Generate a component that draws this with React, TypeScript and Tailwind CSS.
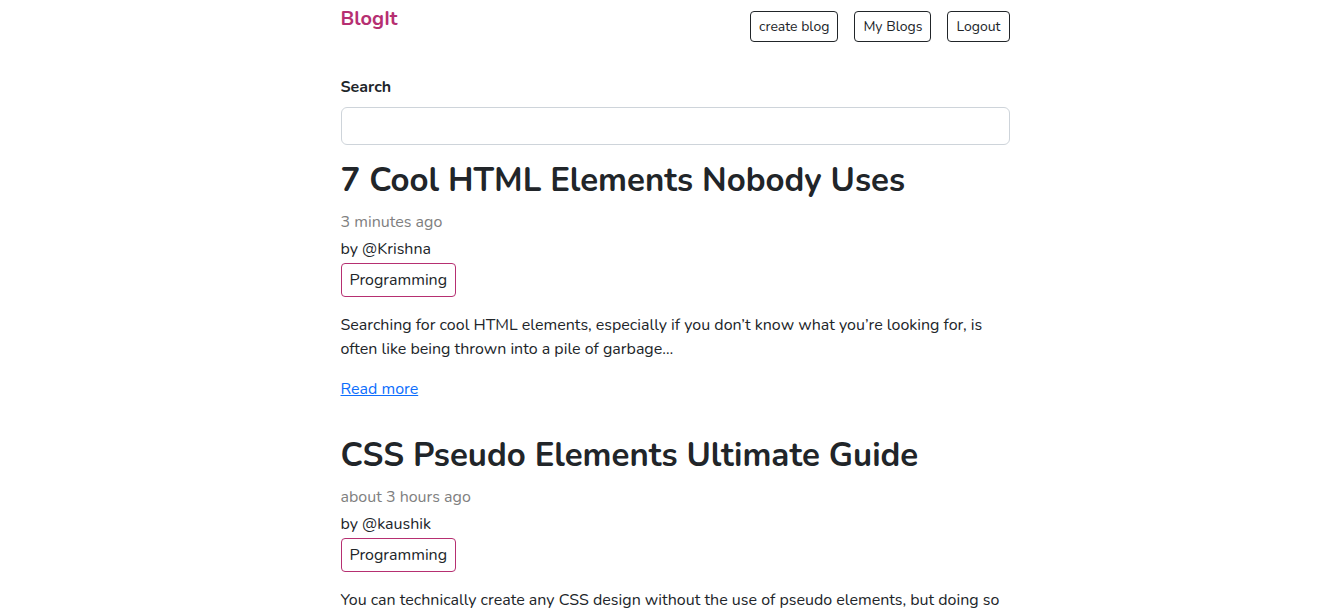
import React from "react";

type Post = { title: string; age: string; author: string; tag: string; excerpt: string };

const posts: Post[] = [
  {
    title: "7 Cool HTML Elements Nobody Uses",
    age: "3 minutes ago",
    author: "Krishna",
    tag: "Programming",
    excerpt:
      "Searching for cool HTML elements, especially if you don’t know what you’re looking for, is often like being thrown into a pile of garbage…",
  },
  {
    title: "CSS Pseudo Elements Ultimate Guide",
    age: "about 3 hours ago",
    author: "kaushik",
    tag: "Programming",
    excerpt: "You can technically create any CSS design without the use of pseudo elements, but doing so",
  },
];

const navItems = ["create blog", "My Blogs", "Logout"];

function Article({ post }: { post: Post }) {
  return (
    <article className="mb-[35px]">
      <h2 className="mb-[9px] text-[33px] leading-10 font-bold">{post.title}</h2>
      <div className="mb-[3px] text-[#808080]">{post.age}</div>
      <div className="mb-[2px]">by @{post.author}</div>
      <div className="w-fit rounded border border-[#b62f71] px-2 py-1">{post.tag}</div>
      <p className="mt-4 mb-4">{post.excerpt}</p>
      <a href="#read" className="block w-fit text-[#0d6efd] underline">Read more</a>
    </article>
  );
}

export default function App() {
  return (
    <div className="min-h-screen bg-white pl-3 font-[Nunito,'Noto_Sans',sans-serif] text-base text-[#212529]">
      <div className="mx-auto max-w-[669px]">
        <header className="flex items-start justify-between">
          <a href="#home" className="pt-[5px] text-xl font-bold text-[#b62f71]">BlogIt</a>
          <nav className="flex gap-4 pt-[11px]">
            {navItems.map((item) => (
              <button key={item} className="rounded border border-[#212529] px-2 py-1 text-sm leading-[21px]">{item}</button>
            ))}
          </nav>
        </header>
        <main className="pt-[33px]">
          <label htmlFor="search" className="mb-2 block w-fit font-bold">Search</label>
          <input id="search" type="search" className="mb-4 block h-[38px] w-full rounded-md border border-[#ced4da] px-3" />
          {posts.map((post) => (
            <Article key={post.title} post={post} />
          ))}
        </main>
      </div>
    </div>
  );
}
